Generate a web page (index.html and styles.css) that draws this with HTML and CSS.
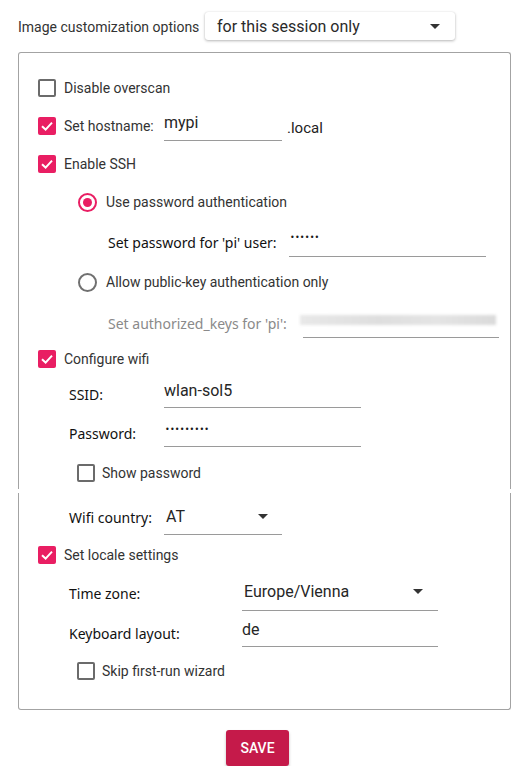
FILE: index.html
```html
<!DOCTYPE html>
<html lang="en">
<head>
<meta charset="utf-8">
<title>Image customization options</title>
<link rel="stylesheet" href="styles.css">
</head>
<body>
<div class="page">
  <div class="header">
    <span class="hdr-label">Image customization options</span>
    <div class="dropdown">
      <span class="dd-text">for this session only</span>
      <svg class="caret" width="10" height="5" viewBox="0 0 10 5"><polygon points="0,0 10,0 5,5" fill="#333"/></svg>
    </div>
  </div>

  <div class="frame frame-top">
    <div class="row h34 in-1">
      <span class="cb"></span><span class="cb-label">Disable overscan</span>
    </div>
    <div class="row h42 in-1">
      <span class="cb on"><svg viewBox="0 0 18 18" width="18" height="18"><path d="M4 9.3 L7.6 12.6 L14 5.6" fill="none" stroke="#fff" stroke-width="2"/></svg></span>
      <span class="cb-label w100">Set hostname:</span>
      <span class="field w118 f30"><span class="val">mypi</span></span>
      <span class="suffix">.local</span>
    </div>
    <div class="row h33 in-1">
      <span class="cb on"><svg viewBox="0 0 18 18" width="18" height="18"><path d="M4 9.3 L7.6 12.6 L14 5.6" fill="none" stroke="#fff" stroke-width="2"/></svg></span>
      <span class="cb-label">Enable SSH</span>
    </div>
    <div class="row h44 in-radio">
      <span class="radio on"><span class="dot"></span></span>
      <span class="radio-label">Use password authentication</span>
    </div>
    <div class="row h36 in-sub">
      <span class="lbl w181">Set password for 'pi' user:</span>
      <span class="field w197 f30"><span class="dots">••••••</span></span>
    </div>
    <div class="row h44 in-radio">
      <span class="radio"></span>
      <span class="radio-label">Allow public-key authentication only</span>
    </div>
    <div class="row h38 in-sub">
      <span class="lbl w195 muted">Set authorized_keys for 'pi':</span>
      <span class="field w196 f30"><span class="blur"></span></span>
    </div>
    <div class="row h33 in-1">
      <span class="cb on"><svg viewBox="0 0 18 18" width="18" height="18"><path d="M4 9.3 L7.6 12.6 L14 5.6" fill="none" stroke="#fff" stroke-width="2"/></svg></span>
      <span class="cb-label">Configure wifi</span>
    </div>
    <div class="row h38 in-2">
      <span class="lbl w95">SSID:</span>
      <span class="field w197 f28"><span class="val">wlan-sol5</span></span>
    </div>
    <div class="row h40 in-2">
      <span class="lbl w95">Password:</span>
      <span class="field w197 f28"><span class="dots">•••••••••</span></span>
    </div>
    <div class="row h36 pt4 in-cb2">
      <span class="cb"></span><span class="cb-label sm-gap">Show password</span>
    </div>
  </div>

  <div class="frame frame-bottom">
    <div class="row h48 in-2">
      <span class="lbl w95">Wifi country:</span>
      <span class="field select w118 f36"><span class="val">AT</span>
        <svg class="caret" width="10" height="5" viewBox="0 0 10 5"><polygon points="0,0 10,0 5,5" fill="#333"/></svg></span>
    </div>
    <div class="row h27 in-1">
      <span class="cb on"><svg viewBox="0 0 18 18" width="18" height="18"><path d="M4 9.3 L7.6 12.6 L14 5.6" fill="none" stroke="#fff" stroke-width="2"/></svg></span>
      <span class="cb-label">Set locale settings</span>
    </div>
    <div class="row h50 in-2">
      <span class="lbl w173">Time zone:</span>
      <span class="field select tz w196 f36"><span class="val">Europe/Vienna</span>
        <svg class="caret" width="10" height="5" viewBox="0 0 10 5"><polygon points="0,0 10,0 5,5" fill="#333"/></svg></span>
    </div>
    <div class="row h30 in-2">
      <span class="lbl w173">Keyboard layout:</span>
      <span class="field w196 f28"><span class="val">de</span></span>
    </div>
    <div class="row h45 in-cb2">
      <span class="cb"></span><span class="cb-label sm-gap">Skip first-run wizard</span>
    </div>
  </div>

  <div class="actions">
    <button class="save" type="button">SAVE</button>
  </div>
</div>
</body>
</html>
```

FILE: styles.css
```css
* { box-sizing: border-box; }
html, body { margin: 0; padding: 0; background: #fff; }
body { font-family: Roboto, "Noto Sans", sans-serif; color: #333; }

.page { width: 532px; }

.header {
  display: flex;
  align-items: center;
  padding: 12px 0 0 18px;
  height: 40px;
}
.hdr-label {
  width: 187px;
  font-size: 14px;
  color: #333;
  padding-top: 1px;
}
.dropdown {
  width: 250px;
  height: 28px;
  display: flex;
  align-items: center;
  justify-content: space-between;
  padding: 0 15px 0 12px;
  background: #fff;
  border-radius: 3px;
  box-shadow: 0 1px 3px rgba(0,0,0,0.28), 0 0 1px rgba(0,0,0,0.12);
}
.dd-text { font-size: 16px; color: #2a2a2a; }
.caret { display: block; flex: none; }

.frame {
  margin-left: 18px;
  width: 493px;
  border: 1px solid #a3a3a3;
}
.frame-top {
  margin-top: 12px;
  border-bottom: none;
  border-radius: 3px 3px 0 0;
  padding-top: 18px;
  height: 437px;
}
.frame-bottom {
  margin-top: 4px;
  border-top: none;
  border-radius: 0 0 3px 3px;
  height: 217px;
}

.row { display: flex; align-items: center; }
.h27 { height: 27px; }
.h30 { height: 30px; }
.h33 { height: 33px; }
.h34 { height: 34px; }
.h36 { height: 36px; }
.h38 { height: 38px; }
.h40 { height: 40px; }
.h42 { height: 42px; }
.h44 { height: 44px; }
.h45 { height: 45px; }
.h48 { height: 48px; }
.h50 { height: 50px; }
.pt4 { padding-top: 4px; }

.in-1 { padding-left: 19px; }
.in-radio { padding-left: 59px; }
.in-sub { padding-left: 89px; }
.in-2 { padding-left: 50px; }
.in-cb2 { padding-left: 58px; }

.cb {
  width: 18px;
  height: 18px;
  flex: none;
  border: 2px solid #6b6b6b;
  border-radius: 2px;
  display: block;
}
.cb.on {
  border: none;
  background: #e91e63;
}
.cb svg { display: block; }
.cb-label {
  margin-left: 8px;
  font-size: 14px;
  color: #333;
}
.cb-label.sm-gap { margin-left: 7px; }

.radio {
  width: 19px;
  height: 19px;
  flex: none;
  border: 2px solid #707070;
  border-radius: 50%;
  display: flex;
  align-items: center;
  justify-content: center;
}
.radio.on { border-color: #e91e63; }
.radio .dot {
  width: 9px;
  height: 9px;
  border-radius: 50%;
  background: #e91e63;
}
.radio-label {
  margin-left: 9px;
  font-size: 14px;
  color: #333;
}

.lbl {
  font-family: "Noto Sans", "Open Sans", sans-serif;
  font-size: 14px;
  color: #111;
  flex: none;
}
.lbl.muted { color: #8a8a8a; }
.w95 { width: 95px; }
.w100 { width: 100px; }
.w173 { width: 173px; }
.w181 { width: 181px; }
.w195 { width: 195px; }
.w118 { width: 118px; }
.w196 { width: 196px; }
.w197 { width: 197px; }

.field {
  display: flex;
  align-items: center;
  flex: none;
  border-bottom: 1px solid #9a9a9a;
  padding-bottom: 6px;
}
.f28 { height: 28px; }
.f30 { height: 30px; }
.f36 { height: 36px; padding-bottom: 0; }
.field .val { font-size: 16px; color: #262626; }
.field.select { justify-content: space-between; padding-left: 2px; padding-right: 14px; }
.field.tz { padding-bottom: 2px; padding-right: 15px; }
.suffix { margin-left: 5px; font-size: 15px; color: #222; padding-top: 3px; }

.dots {
  font-family: "DejaVu Sans", sans-serif;
  font-size: 8px;
  line-height: 8px;
  letter-spacing: 0.2px;
  color: #1a1a1a;
  align-self: flex-start;
  margin-top: 7px;
  margin-left: 1px;
}
.blur {
  display: block;
  width: 196px;
  height: 10px;
  margin-left: -3px;
  background: linear-gradient(90deg, #e8e8e8, #dedede 40%, #e4e4e4 70%, #dadada);
  filter: blur(1.5px);
}

.actions { padding: 20px 0 0 226px; }
.save {
  width: 63px;
  height: 36px;
  border: none;
  border-radius: 3px;
  background: #c51a4a;
  color: #fff;
  font-family: Roboto, sans-serif;
  font-size: 14px;
  font-weight: 500;
  box-shadow: 0 2px 3px rgba(0,0,0,0.25);
  padding: 0;
}
```
